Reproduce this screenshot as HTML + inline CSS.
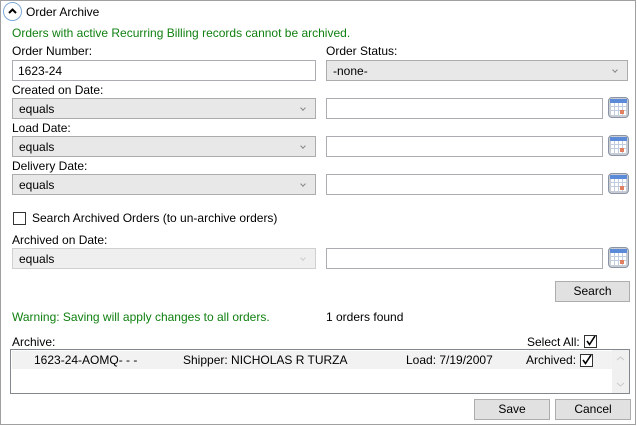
<!DOCTYPE html>
<html><head><style>
*{box-sizing:border-box;margin:0;padding:0}
body{width:637px;height:426px;background:#fff;font-family:"Liberation Sans",sans-serif;font-size:12px;color:#000;position:relative;overflow:hidden}
.a{position:absolute;white-space:nowrap}
.frame{position:absolute;left:0;top:0;width:636px;height:425px;border:1px solid #a0a0a0}
.inp{position:absolute;border:1px solid #abadb3;background:#fff;height:21px;padding:3px 5px}
.sel{position:absolute;border:1px solid #acacac;background:#e8e8e8;height:21px;padding:3px 6px}
.sel:after{content:"";position:absolute;right:10px;top:7px;width:3px;height:3px;border-right:1px solid #888;border-bottom:1px solid #888;transform:rotate(45deg)}
.dis{background:#efefef;border-color:#d0d0d0}
.dis:after{border-color:#ccc}
.cal{position:absolute;width:21px;height:21px;border-radius:4px;background:#c8ccd4;border:1px solid #8a94a4}
.cal u{position:absolute;left:1px;top:1px;width:17px;height:4px;background:#5a8ad8}
.cal i{position:absolute;left:2px;top:5px;width:15px;height:12px;background:#fff;background-image:linear-gradient(90deg,transparent 3px,#c0cce0 3px,#c0cce0 4px,transparent 4px,transparent 7px,#c0cce0 7px,#c0cce0 8px,transparent 8px,transparent 11px,#c0cce0 11px,#c0cce0 12px,transparent 12px),linear-gradient(transparent 3px,#c0cce0 3px,#c0cce0 4px,transparent 4px,transparent 7px,#c0cce0 7px,#c0cce0 8px,transparent 8px)}
.cal b{position:absolute;left:11px;top:12px;width:4px;height:4px;background:#e08060}
.btn{position:absolute;border:1px solid #adadad;background:#e1e1e1;height:21px;text-align:center;line-height:19px}
.cb{position:absolute;width:13px;height:13px;border:1px solid #333;background:#fff}
.g{color:#108010}
</style></head><body>
<div class="frame"></div>
<div class="a" style="left:3px;top:2px;width:19px;height:19px;border:1px solid #7fa8d8;border-radius:50%;background:#fff"><svg width="17" height="17" style="position:absolute;left:0;top:0"><path d="M5 10 L8.5 6.5 L12 10" stroke="#000" stroke-width="2" fill="none"/></svg></div>
<div class="a" style="left:26px;top:5px">Order Archive</div>
<div class="a g" style="left:12px;top:26px">Orders with active Recurring Billing records cannot be archived.</div>
<div class="a" style="left:12px;top:44px">Order Number:</div>
<div class="a" style="left:326px;top:44px">Order Status:</div>
<div class="inp" style="left:12px;top:60px;width:304px">1623-24</div>
<div class="sel" style="left:326px;top:60px;width:302px">-none-</div>

<div class="a" style="left:12px;top:83px">Created on Date:</div>
<div class="sel" style="left:12px;top:98px;width:304px">equals</div>
<div class="inp" style="left:326px;top:98px;width:277px"></div>
<div class="cal" style="left:608px;top:97px"><u></u><i></i><b></b></div>

<div class="a" style="left:12px;top:121px">Load Date:</div>
<div class="sel" style="left:12px;top:136px;width:304px">equals</div>
<div class="inp" style="left:326px;top:136px;width:277px"></div>
<div class="cal" style="left:608px;top:135px"><u></u><i></i><b></b></div>

<div class="a" style="left:12px;top:159px">Delivery Date:</div>
<div class="sel" style="left:12px;top:174px;width:304px">equals</div>
<div class="inp" style="left:326px;top:174px;width:277px"></div>
<div class="cal" style="left:608px;top:173px"><u></u><i></i><b></b></div>

<div class="cb" style="left:13px;top:212px"></div>
<div class="a" style="left:32px;top:211px">Search Archived Orders (to un-archive orders)</div>
<div class="a" style="left:12px;top:233px">Archived on Date:</div>
<div class="sel dis" style="left:12px;top:248px;width:304px">equals</div>
<div class="inp" style="left:326px;top:248px;width:277px"></div>
<div class="cal" style="left:608px;top:247px"><u></u><i></i><b></b></div>

<div class="btn" style="left:555px;top:281px;width:75px">Search</div>
<div class="a g" style="left:12px;top:310px">Warning: Saving will apply changes to all orders.</div>
<div class="a" style="left:326px;top:310px">1 orders found</div>

<div class="a" style="left:12px;top:335px">Archive:</div>
<div class="a" style="left:527px;top:335px">Select All:</div>
<div class="cb" style="left:584px;top:335px"><svg width="11" height="11" style="position:absolute;left:0;top:0"><path d="M2 5 L4.5 8.5 L10 0" stroke="#000" stroke-width="1.6" fill="none"/></svg></div>

<div class="a" style="left:10px;top:349px;width:620px;height:45px;border:1px solid #828790;background:#fff">
<div class="a" style="left:1px;top:1px;width:608px;height:18px;background:#f2f2f2"></div>
<div class="a" style="right:0;top:0;width:17px;height:43px;background:#f0f0f0">
<svg width="17" height="43" style="position:absolute;left:0;top:0"><path d="M5 10 L8.5 7 L12 10" stroke="#c8c8c8" fill="none"/><path d="M5 33 L8.5 36 L12 33" stroke="#c8c8c8" fill="none"/></svg></div>
</div>
<div class="a" style="left:34px;top:353px">1623-24-AOMQ- - -</div>
<div class="a" style="left:183px;top:353px">Shipper: NICHOLAS R TURZA</div>
<div class="a" style="left:406px;top:353px">Load: 7/19/2007</div>
<div class="a" style="left:526px;top:353px">Archived:</div>
<div class="cb" style="left:580px;top:354px"><svg width="11" height="11" style="position:absolute;left:0;top:0"><path d="M2 5 L4.5 8.5 L10 0" stroke="#000" stroke-width="1.6" fill="none"/></svg></div>

<div class="btn" style="left:474px;top:399px;width:76px">Save</div>
<div class="btn" style="left:555px;top:399px;width:76px">Cancel</div>
</body></html>
